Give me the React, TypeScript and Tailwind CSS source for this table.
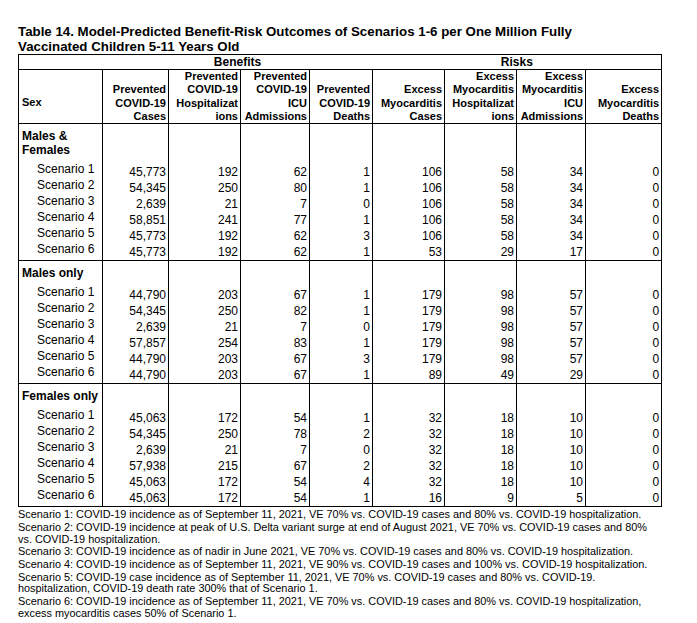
import React from "react"

type Row = [string, string, string, string, string, string, string, string]

const sections: { label: string[]; rows: Row[] }[] = [
  {
    label: ["Males &", "Females"],
    rows: [
      ["45,773", "192", "62", "1", "106", "58", "34", "0"],
      ["54,345", "250", "80", "1", "106", "58", "34", "0"],
      ["2,639", "21", "7", "0", "106", "58", "34", "0"],
      ["58,851", "241", "77", "1", "106", "58", "34", "0"],
      ["45,773", "192", "62", "3", "106", "58", "34", "0"],
      ["45,773", "192", "62", "1", "53", "29", "17", "0"],
    ],
  },
  {
    label: ["Males only"],
    rows: [
      ["44,790", "203", "67", "1", "179", "98", "57", "0"],
      ["54,345", "250", "82", "1", "179", "98", "57", "0"],
      ["2,639", "21", "7", "0", "179", "98", "57", "0"],
      ["57,857", "254", "83", "1", "179", "98", "57", "0"],
      ["44,790", "203", "67", "3", "179", "98", "57", "0"],
      ["44,790", "203", "67", "1", "89", "49", "29", "0"],
    ],
  },
  {
    label: ["Females only"],
    rows: [
      ["45,063", "172", "54", "1", "32", "18", "10", "0"],
      ["54,345", "250", "78", "2", "32", "18", "10", "0"],
      ["2,639", "21", "7", "0", "32", "18", "10", "0"],
      ["57,938", "215", "67", "2", "32", "18", "10", "0"],
      ["45,063", "172", "54", "4", "32", "18", "10", "0"],
      ["45,063", "172", "54", "1", "16", "9", "5", "0"],
    ],
  },
]

const headers: string[][] = [
  ["Prevented", "COVID-19", "Cases"],
  ["Prevented", "COVID-19", "Hospitalizat", "ions"],
  ["Prevented", "COVID-19", "ICU", "Admissions"],
  ["Prevented", "COVID-19", "Deaths"],
  ["Excess", "Myocarditis", "Cases"],
  ["Excess", "Myocarditis", "Hospitalizat", "ions"],
  ["Excess", "Myocarditis", "ICU", "Admissions"],
  ["Excess", "Myocarditis", "Deaths"],
]

const colWidths = [84, 66, 72, 69, 63, 72, 72, 69, 76]

const notes: string[][] = [
  ["Scenario 1: COVID-19 incidence as of September 11, 2021, VE 70% vs. COVID-19 cases and 80% vs. COVID-19 hospitalization."],
  [
    "Scenario 2: COVID-19 incidence at peak of U.S. Delta variant surge at end of August 2021, VE 70% vs. COVID-19 cases and 80%",
    "vs. COVID-19 hospitalization.",
  ],
  ["Scenario 3: COVID-19 incidence as of nadir in June 2021, VE 70% vs. COVID-19 cases and 80% vs. COVID-19 hospitalization."],
  ["Scenario 4: COVID-19 incidence as of September 11, 2021, VE 90% vs. COVID-19 cases and 100% vs. COVID-19 hospitalization."],
  [
    "Scenario 5: COVID-19 case incidence as of September 11, 2021, VE 70% vs. COVID-19 cases and 80% vs. COVID-19.",
    "hospitalization, COVID-19 death rate 300% that of Scenario 1.",
  ],
  [
    "Scenario 6: COVID-19 incidence as of September 11, 2021, VE 70% vs. COVID-19 cases and 80% vs. COVID-19 hospitalization,",
    "excess myocarditis cases 50% of Scenario 1.",
  ],
]

export default function App() {
  return (
    <div className="min-h-screen bg-white px-[18px] pt-[25px] text-black font-['Liberation_Sans',Arial,sans-serif]">
      {/* Title */}
      <h1 className="text-[13.3px] font-bold leading-[14.5px]">
        Table 14. Model-Predicted Benefit-Risk Outcomes of Scenarios 1-6 per One Million Fully
        <br />
        Vaccinated Children 5-11 Years Old
      </h1>

      <table className="table-fixed border-collapse border border-black w-[643px]">
        <colgroup>
          {colWidths.map((w, i) => (
            <col key={i} style={{ width: w }} />
          ))}
        </colgroup>
        <thead>
          <tr className="border-b border-black">
            <th className="p-0" />
            <th colSpan={4} className="p-0 text-center text-[12px] font-bold leading-[14px]">
              Benefits
            </th>
            <th colSpan={4} className="p-0 text-center text-[12px] font-bold leading-[14px]">
              Risks
            </th>
          </tr>
          <tr className="border-b border-black">
            <th className="border-r border-black pl-[3px] pt-[12px] text-left align-middle text-[11px] font-bold leading-[13.3px]">
              Sex
            </th>
            {headers.map((lines, i) => (
              <th
                key={i}
                className="border-x border-black p-0 pr-[2px] text-right align-bottom text-[11px] font-bold leading-[13.3px]"
              >
                {lines.map((l, j) => (
                  <div key={j} className="whitespace-nowrap">
                    {l}
                  </div>
                ))}
              </th>
            ))}
          </tr>
        </thead>
        {sections.map((s) => (
          <tbody key={s.label.join(" ")} className="border-t border-black">
            <tr>
              <td className="border-r border-black pl-[3px] pt-[5px] pb-[7px] align-top text-[12px] font-bold leading-[14px]">
                {s.label.map((l) => (
                  <div key={l} className="whitespace-nowrap">
                    {l}
                  </div>
                ))}
              </td>
              {colWidths.slice(1).map((_, i) => (
                <td key={i} className="border-x border-black p-0" />
              ))}
            </tr>
            {s.rows.map((r, ri) => (
              <tr key={ri} className="h-[16px]">
                <td className="border-r border-black p-0 pl-[18px] align-top text-[12px] leading-[10px] whitespace-nowrap">
                  Scenario {ri + 1}
                </td>
                {r.map((v, vi) => (
                  <td
                    key={vi}
                    className="border-x border-black p-0 pr-[2px] text-right align-middle text-[12px] leading-[16px]"
                  >
                    {v}
                  </td>
                ))}
              </tr>
            ))}
          </tbody>
        ))}
      </table>

      {/* Footnotes */}
      <div className="mt-[2px] flex flex-col gap-[1px] text-[10.9px] leading-[11.7px]">
        {notes.map((n, i) => (
          <p key={i}>
            {n.map((l, j) => (
              <span key={j} className="block whitespace-nowrap">
                {l}
              </span>
            ))}
          </p>
        ))}
      </div>
    </div>
  )
}
